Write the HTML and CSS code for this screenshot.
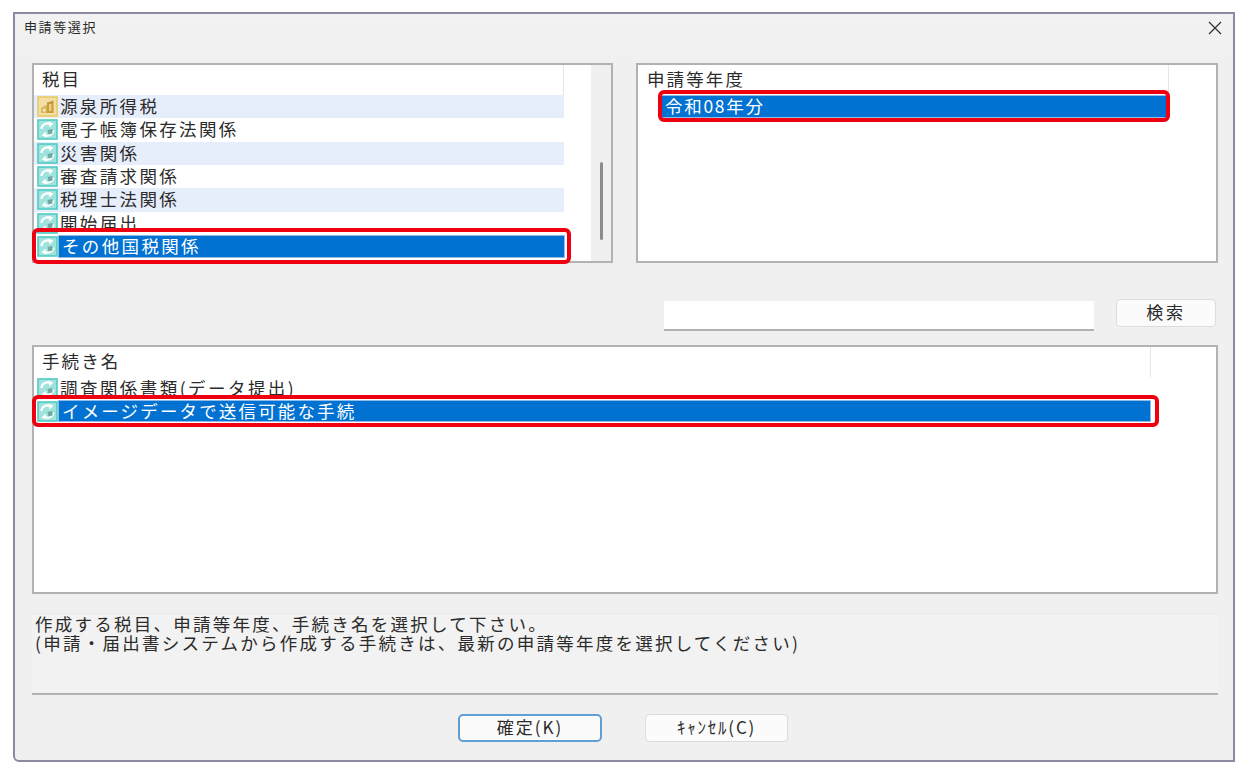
FILE: index.html
```html
<!DOCTYPE html>
<html lang="ja">
<head>
<meta charset="utf-8">
<title>申請等選択</title>
<link rel="stylesheet" href="styles.css">
</head>
<body>
<svg class="defs" width="0" height="0" aria-hidden="true">
  <symbol id="doc" viewBox="0 0 21 21">
    <rect x="1" y="1" width="19" height="19" fill="#9fe3dc" stroke="#52cbc3" stroke-width="1.600"/>
    <path d="M4.500 10A6 6 0 0 1 13 5" fill="none" stroke="#fff" stroke-width="2.200"/>
    <path d="M11.500 2.500L16.500 4.500L12.500 8.500Z" fill="#fff"/>
    <path d="M16.500 11.500A6 6 0 0 1 8 16" fill="none" stroke="#fff" stroke-width="2.200"/>
    <path d="M9.500 18.500L4.500 16.500L8.500 12.500Z" fill="#fff"/>
    <path d="M10.500 11L15.500 10V14.500L11.500 15.500Z" fill="#6fa9a4"/>
  </symbol>
  <symbol id="coin" viewBox="0 0 21 21">
    <rect x="1" y="1" width="19" height="19" fill="#f1dfa6" stroke="#ecca63" stroke-width="1.600"/>
    <path d="M4 12L10 8.500V17H4Z" fill="#dcb65a"/>
    <path d="M10 6.500L16.500 4.500V17H10Z" fill="#c79a3c"/>
    <path d="M6 13H8.500V15.500H6Z" fill="#f8ecc6"/>
    <path d="M12 8H14.500V15H12Z" fill="#ecd07f"/>
  </symbol>
</svg>
<main class="window">
  <header class="titlebar">
    <span class="title">申請等選択</span>
    <svg class="close" viewBox="0 0 14 14" width="14" height="14" aria-label="閉じる"><path d="M1 1L13 13M13 1L1 13" stroke="#333" stroke-width="1.300" fill="none"/></svg>
  </header>
  <div class="content">
    <section class="top-panels">
      <div class="panel panel-tax">
        <div class="list list-tax">
          <div class="list-head head-tax">税目</div>
          <div class="row band"><svg class="icon"><use href="#coin"/></svg><span class="label">源泉所得税</span></div>
          <div class="row"><svg class="icon"><use href="#doc"/></svg><span class="label">電子帳簿保存法関係</span></div>
          <div class="row band"><svg class="icon"><use href="#doc"/></svg><span class="label">災害関係</span></div>
          <div class="row"><svg class="icon"><use href="#doc"/></svg><span class="label">審査請求関係</span></div>
          <div class="row band"><svg class="icon"><use href="#doc"/></svg><span class="label">税理士法関係</span></div>
          <div class="row"><svg class="icon"><use href="#doc"/></svg><span class="label">開始届出</span></div>
          <div class="row selected mark-tax"><svg class="icon"><use href="#doc"/></svg><span class="label">その他国税関係</span></div>
        </div>
        <div class="scrolltrack"><div class="scrollthumb"></div></div>
      </div>
      <div class="panel panel-year">
        <div class="list">
          <div class="list-head head-year">申請等年度</div>
          <div class="row selected year-row mark-year"><span class="label">令和08年分</span></div>
        </div>
      </div>
    </section>
    <section class="search">
      <input class="search-input" type="text" aria-label="検索語">
      <button class="btn btn-search" type="button">検索</button>
    </section>
    <section class="panel panel-proc">
      <div class="list">
        <div class="list-head head-proc">手続き名</div>
        <div class="row"><svg class="icon"><use href="#doc"/></svg><span class="label label-paren">調査関係書類(データ提出)</span></div>
        <div class="row selected proc-row mark-proc"><svg class="icon"><use href="#doc"/></svg><span class="label">イメージデータで送信可能な手続</span></div>
      </div>
    </section>
    <section class="message">
      <p>作成する税目、申請等年度、手続き名を選択して下さい。</p>
      <p>(申請・届出書システムから作成する手続きは、最新の申請等年度を選択してください)</p>
    </section>
    <footer class="actions">
      <button class="btn btn-ok" type="button">確定(K)</button>
      <button class="btn btn-cancel" type="button">ｷｬﾝｾﾙ(C)</button>
    </footer>
  </div>
</main>
</body>
</html>
```
FILE: styles.css
```css
* { box-sizing: border-box; }
html, body { margin: 0; padding: 0; }
body {
  width: 1249px;
  height: 779px;
  overflow: hidden;
  background: #fff;
  padding: 12px 0 0 13px;
  font-family: "Noto Sans CJK JP", "Liberation Sans", sans-serif;
  font-weight: 400;
  color: #2b2b2b;
}
.defs { position: absolute; }
.window {
  width: 1222px;
  height: 750px;
  display: flex;
  flex-direction: column;
  background: #f0f0f0;
  border: 2px solid #8a8ba3;
  border-radius: 0 0 0 6px;
}
.titlebar {
  height: 49px;
  flex: none;
  display: flex;
  justify-content: space-between;
  align-items: flex-start;
  padding: 3px 11px 0 9px;
  background: linear-gradient(#f2f2f2, #f0f0f0);
}
.title { font-size: 13px; line-height: 20px; letter-spacing: 1.600px; }
.close { margin-top: 4px; }
.content { flex: 1; display: flex; flex-direction: column; padding: 0 15px 0 17px; }
.top-panels { display: flex; gap: 23px; height: 200px; flex: none; }
.panel {
  display: flex;
  background: #fff;
  border: 2px solid #b2b2b2;
}
.panel-tax { width: 581px; }
.panel-year { width: 582px; }
.panel-proc { height: 249px; margin-top: 14px; flex: none; }
.list { flex: 1; min-width: 0; }
.list-tax { width: 557px; }
.list-head {
  height: 30px;
  padding-left: 8px;
  font-size: 17.500px;
  line-height: 28px;
  letter-spacing: 2.100px;
  border-right: 1px solid #e6e6e6;
}
.head-tax { width: 530px; }
.head-year { width: 531px; padding-left: 9px; }
.head-proc { width: 1117px; }
.row {
  position: relative;
  display: flex;
  align-items: center;
  height: 23.330px;
  width: 530px;
  padding-left: 3px;
  font-size: 17.500px;
  letter-spacing: 2.350px;
  white-space: nowrap;
}
.band { background: #e6edfb; }
.icon { width: 21px; height: 21px; flex: none; }
.label { display: block; flex: 1; line-height: 21px; padding: 0 0 2px 2px; }
.label-paren { letter-spacing: 2.450px; }
.selected { width: 531px; color: #fff; }
.selected .label {
  align-self: stretch;
  padding-left: 4px;
  background: #0272d2;
  box-shadow: inset 0 0 0 1px #8fbde8;
}
.year-row { width: 507px; margin-left: 23px; padding-left: 0; letter-spacing: 1.700px; }
.proc-row { width: 1117px; height: 22px; letter-spacing: 2.150px; }
.selected::after {
  content: "";
  position: absolute;
  border: 4px solid #ee0010;
  border-radius: 6px;
  pointer-events: none;
}
.mark-tax::after { left: -2px; right: -6px; top: -7px; bottom: -6px; }
.mark-year::after { left: -3px; right: -2px; top: -5px; bottom: -4px; }
.mark-proc::after { left: -2px; right: -8px; top: -5px; bottom: -5px; }
.scrolltrack { width: 20px; flex: none; background: #f0f0f0; padding: 97px 0 0 9px; }
.scrollthumb { width: 3px; height: 78px; background: #8c8c8c; border-radius: 2px; }
.search { display: flex; justify-content: flex-end; align-items: flex-start; gap: 22px; height: 32px; margin-top: 36px; padding-right: 2px; flex: none; }
.search-input {
  width: 430px;
  height: 30px;
  margin-top: 2px;
  background: #fff;
  border: 0;
  border-bottom: 2px solid #b2b2b2;
  outline: 0;
}
.btn {
  font-family: inherit;
  color: #2b2b2b;
  background: #fbfbfb;
  border: 1px solid #dcdcdc;
  border-radius: 4px;
  padding: 0 0 3px;
  font-size: 17px;
  letter-spacing: 2px;
  line-height: 22px;
}
.btn-search { width: 100px; height: 28px; letter-spacing: 2.800px; }
.message {
  height: 82px;
  margin-top: 19px;
  padding: 0 0 0 3px;
  background: #f2f2f2;
  border-top: 1px solid #e8e8e8;
  border-bottom: 2px solid #b2b2b2;
  flex: none;
  font-size: 17.500px;
  line-height: 19px;
  letter-spacing: 2.250px;
}
.message p { margin: 0; white-space: nowrap; }
.actions { display: flex; align-items: flex-start; gap: 43px; padding: 19px 0 0 426px; }
.btn-ok { width: 144px; height: 28px; border: 2px solid #5f9fd6; border-radius: 5px; }
.btn-cancel { width: 143px; height: 28px; letter-spacing: 1.800px; }
```
